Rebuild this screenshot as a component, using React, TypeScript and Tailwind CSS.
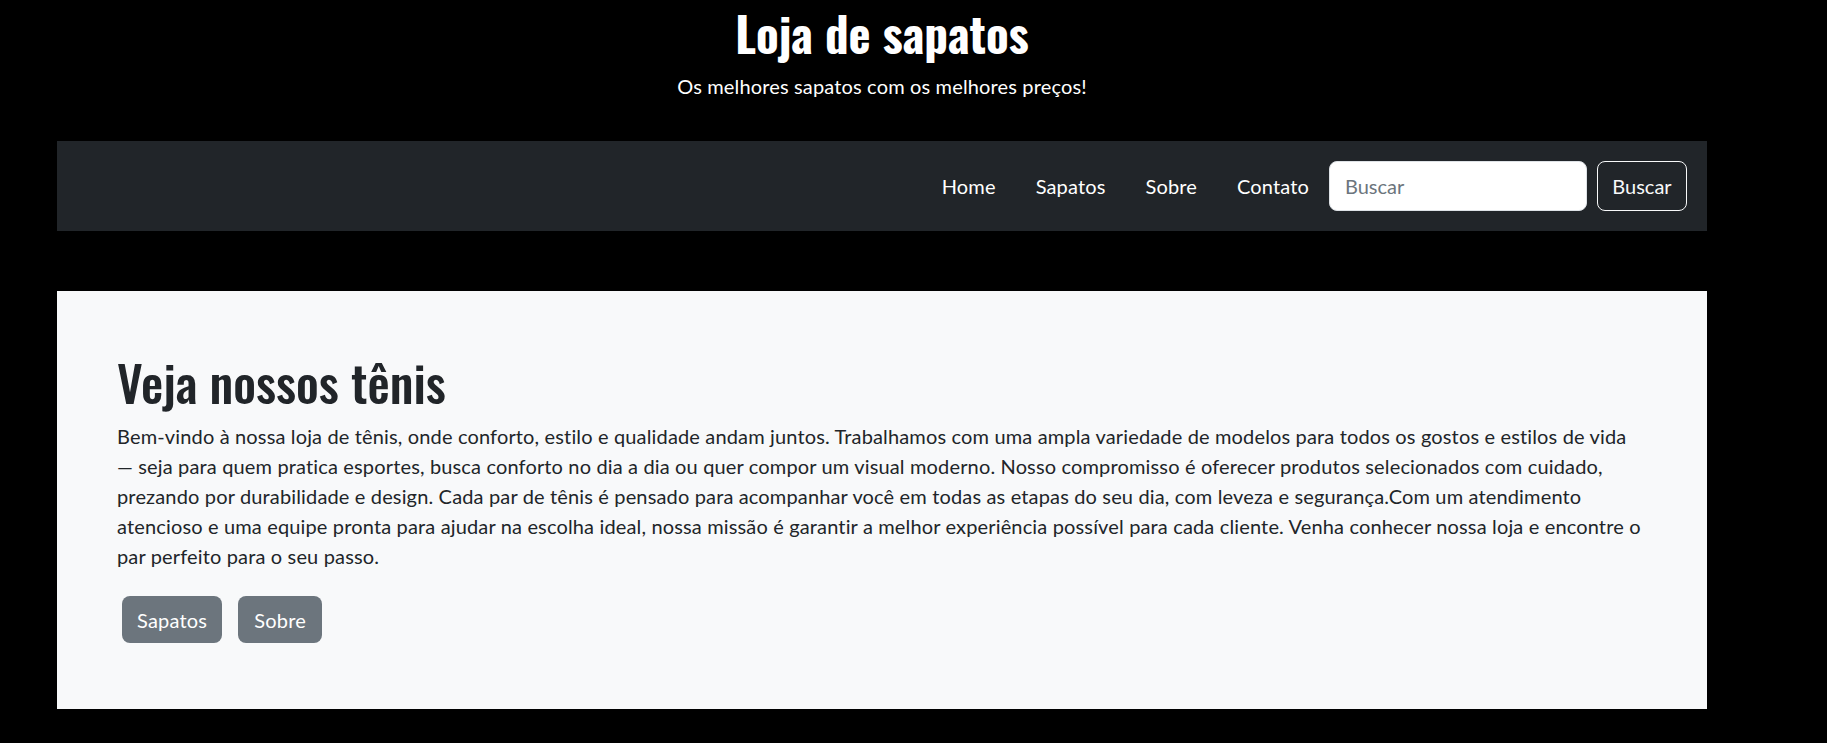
import React from "react";

const display = '"Oswald", "Liberation Sans Narrow", "DejaVu Sans Condensed", "Arial Narrow", sans-serif';
const body = '"Lato", "Noto Sans", "Liberation Sans", sans-serif';

const links = ["Home", "Sapatos", "Sobre", "Contato"];

const lines = [
  "Bem-vindo à nossa loja de tênis, onde conforto, estilo e qualidade andam juntos. Trabalhamos com uma ampla variedade de modelos para todos os gostos e estilos de vida",
  "— seja para quem pratica esportes, busca conforto no dia a dia ou quer compor um visual moderno. Nosso compromisso é oferecer produtos selecionados com cuidado,",
  "prezando por durabilidade e design. Cada par de tênis é pensado para acompanhar você em todas as etapas do seu dia, com leveza e segurança.Com um atendimento",
  "atencioso e uma equipe pronta para ajudar na escolha ideal, nossa missão é garantir a melhor experiência possível para cada cliente. Venha conhecer nossa loja e encontre o",
  "par perfeito para o seu passo.",
];

export default function App() {
  const [query, setQuery] = React.useState("");

  return (
    <div className="min-h-[743px] bg-black" style={{ fontFamily: body }}>
      <header className="ml-[57px] w-[1650px] flex flex-col items-center pt-[3px]">
        <h1
          className="text-[47px] leading-[60px] font-bold text-white"
          style={{ fontFamily: display }}
        >
          Loja de sapatos
        </h1>
        <p className="mt-[8px] text-[20px] leading-[30px] text-white tracking-[0.15px]">
          Os melhores sapatos com os melhores preços!
        </p>
      </header>

      <nav className="mt-[40px] ml-[57px] w-[1650px] h-[90px] bg-[#212529] flex items-center justify-end pr-[20px]">
        <ul className="flex items-center">
          {links.map((l) => (
            <li key={l}>
              <a href="#" className="block px-[20px] text-[20px] leading-[30px] text-white tracking-[0.15px]">
                {l}
              </a>
            </li>
          ))}
        </ul>
        <form className="flex items-center gap-[10px]" onSubmit={(e) => e.preventDefault()}>
          <input
            value={query}
            onChange={(e) => setQuery(e.target.value)}
            placeholder="Buscar"
            className="w-[258px] h-[50px] rounded-[8px] bg-white border border-[#dee2e6] px-[15px] text-[20px] text-[#212529] placeholder:text-[#6c757d] outline-none"
          />
          <button className="h-[50px] w-[90px] rounded-[8px] border border-[#f8f9fa] text-[20px] text-[#f8f9fa]">
            Buscar
          </button>
        </form>
      </nav>

      <section className="mt-[60px] ml-[57px] w-[1650px] bg-[#f8f9fa] px-[60px] pt-[60px] pb-[61px] text-[#212529]">
        <h2
          className="text-[50px] leading-[60px] font-medium"
          style={{ fontFamily: display }}
        >
          Veja nossos tênis
        </h2>
        <p className="mt-[10px] text-[20px] leading-[30px] tracking-[0.15px] whitespace-nowrap">
          {lines.map((l, i) => (
            <React.Fragment key={i}>
              {l}
              {i < lines.length - 1 && <br />}
            </React.Fragment>
          ))}
        </p>
        <div className="mt-[25px] flex gap-[16px] pl-[5px] pb-[5px]">
          <a href="#" className="h-[47px] px-[15px] flex items-center rounded-[8px] bg-[#6c757d] text-white text-[20px] tracking-[0.2px]">
            Sapatos
          </a>
          <a href="#" className="h-[47px] px-[16px] flex items-center rounded-[8px] bg-[#6c757d] text-white text-[20px] tracking-[0.2px]">
            Sobre
          </a>
        </div>
      </section>
    </div>
  );
}
